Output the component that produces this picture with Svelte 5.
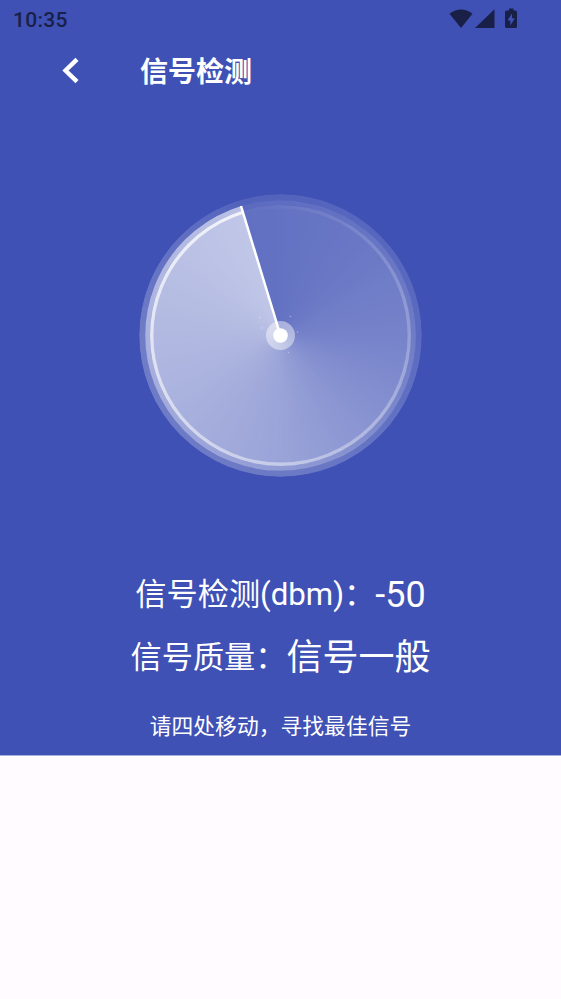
<script lang="ts">
	let time = '10:35';
	let title = '信号检测';
	let dbm = -50;
	let quality = '信号一般';
	let tip = '请四处移动，寻找最佳信号';

	// faint specks around the hub
	let specks = [
		{ x: 121, y: 123.5 },
		{ x: 122.5, y: 134 },
		{ x: 151.5, y: 122.5 },
		{ x: 158.5, y: 138 },
		{ x: 149.5, y: 158.5 }
	];
</script>

<div class="screen">
	<div class="status">
		<span class="time">{time}</span>
		<svg class="icons" width="72" height="22" viewBox="0 0 72 22">
			<path d="M0.5 5.8C4.3 2.6 8 1.5 12 1.5S19.7 2.6 23.5 5.8L12 20Z" />
			<path d="M45.5 1.2V20H26Z" />
			<path
				fill-rule="evenodd"
				d="M60 .5h4.500v2h2q1.500 0 1.500 1.500v14.500q0 1.500-1.500 1.500h-9q-1.500 0-1.500-1.500V4q0-1.500 1.500-1.500h2.500ZM63 5.500l-4.500 7h2.800v5l4.500-7.200h-2.800Z"
			/>
		</svg>
	</div>

	<div class="bar">
		<svg class="back" width="20" height="28" viewBox="0 0 20 28">
			<path d="M17 2.300 5.500 13.500 17 24.700" />
		</svg>
		<h1>{title}</h1>
	</div>

	<div class="radar">
		<svg width="283" height="283" viewBox="0 0 283 283">
			<defs>
				<mask id="outer"><circle cx="141.5" cy="141.5" r="138.2" fill="none" stroke="#fff" stroke-width="6" /></mask>
				<mask id="middle"><circle cx="141.5" cy="141.5" r="132.900" fill="none" stroke="#fff" stroke-width="4.800" /></mask>
				<mask id="disc"><circle cx="141.5" cy="141.5" r="130.500" fill="#fff" /></mask>
				<mask id="rim"><circle cx="141.5" cy="141.5" r="128.800" fill="none" stroke="#fff" stroke-width="3.400" /></mask>
			</defs>
			<foreignObject width="283" height="283" mask="url(#outer)"><div class="sweep edge"></div></foreignObject>
			<foreignObject width="283" height="283" mask="url(#middle)"><div class="sweep band"></div></foreignObject>
			<foreignObject width="283" height="283" mask="url(#disc)"><div class="sweep disc"></div></foreignObject>
			<foreignObject width="283" height="283" mask="url(#rim)"><div class="sweep rim"></div></foreignObject>
			<path d="M141.5 141.5 102 12" stroke="#fff" stroke-width="2.500" />
			{#each specks as s}
				<circle cx={s.x} cy={s.y} r="0.800" fill="#fff" opacity="0.4" />
			{/each}
			<circle cx="141.5" cy="141.5" r="14.500" fill="#fff" opacity="0.45" />
			<circle cx="141.5" cy="141.5" r="7.300" fill="#fff" />
		</svg>
	</div>

	<div class="info">
		<p class="row"><span class="label">信号检测(dbm)：</span><span class="value">{dbm}</span></p>
		<p class="row"><span class="label">信号质量：</span><span class="value">{quality}</span></p>
		<p class="tip">{tip}</p>
	</div>
</div>

<style>
	:global(body) {
		background-color: #fffbff;
	}
	.screen {
		height: 755px;
		background-color: #3f51b5;
		border-bottom: 1px solid #a8b0de;
		color: #fff;
		font-family: Roboto, 'Noto Sans CJK SC', sans-serif;
		display: flex;
		flex-direction: column;
	}
	.status {
		height: 38px;
		padding: 0 43px 0 13px;
		display: flex;
		align-items: center;
		justify-content: space-between;
		color: #192048;
	}
	.time {
		font-size: 21px;
		font-weight: 500;
		letter-spacing: 0.3px;
		line-height: 24px;
		padding-top: 1px;
	}
	.icons {
		fill: #192048;
		margin-right: -3px;
	}
	.bar {
		height: 66px;
		padding-left: 60px;
		display: flex;
		align-items: center;
	}
	.back {
		fill: none;
		stroke: #fff;
		stroke-width: 4.4;
	}
	h1 {
		margin: 0 0 0 60px;
		padding-top: 4px;
		font-size: 28px;
		font-weight: 700;
		line-height: 40px;
	}
	.radar {
		height: 283px;
		display: flex;
		justify-content: center;
		padding-top: 90px;
	}
	.sweep {
		width: 283px;
		height: 283px;
		border-radius: 50%;
	}
	.edge {
		background: conic-gradient(from -17deg, rgba(255, 255, 255, 0.1), rgba(255, 255, 255, 0.15) 107deg, rgba(255, 255, 255, 0.24) 197deg, rgba(255, 255, 255, 0.25) 287deg, rgba(255, 255, 255, 0.15) 345deg, rgba(255, 255, 255, 0.1));
	}
	.band {
		background: conic-gradient(from -17deg, rgba(255, 255, 255, 0.15), rgba(255, 255, 255, 0.25) 107deg, rgba(255, 255, 255, 0.43) 197deg, rgba(255, 255, 255, 0.56) 287deg, rgba(255, 255, 255, 0.64));
	}
	.disc {
		background: conic-gradient(from -17deg, rgba(255, 255, 255, 0.18), rgba(255, 255, 255, 0.22) 55deg, rgba(255, 255, 255, 0.29) 107deg, rgba(255, 255, 255, 0.38) 150deg, rgba(255, 255, 255, 0.48) 197deg, rgba(255, 255, 255, 0.6) 287deg, rgba(255, 255, 255, 0.68));
	}
	.rim {
		background: conic-gradient(from -17deg, rgba(255, 255, 255, 0), rgba(255, 255, 255, 0.78));
	}
	.info {
		padding-top: 87px;
		text-align: center;
	}
	p {
		margin: 0;
	}
	.row {
		height: 62px;
		display: flex;
		align-items: center;
		justify-content: center;
		white-space: nowrap;
	}
	.row + .row {
		height: 64px;
	}
	.label {
		font-size: 31.2px;
		line-height: 44px;
		padding-bottom: 1px;
	}
	.value {
		font-size: 36px;
		line-height: 52px;
	}
	.tip {
		font-size: 21.8px;
		line-height: 32px;
		padding-top: 21px;
	}
</style>
